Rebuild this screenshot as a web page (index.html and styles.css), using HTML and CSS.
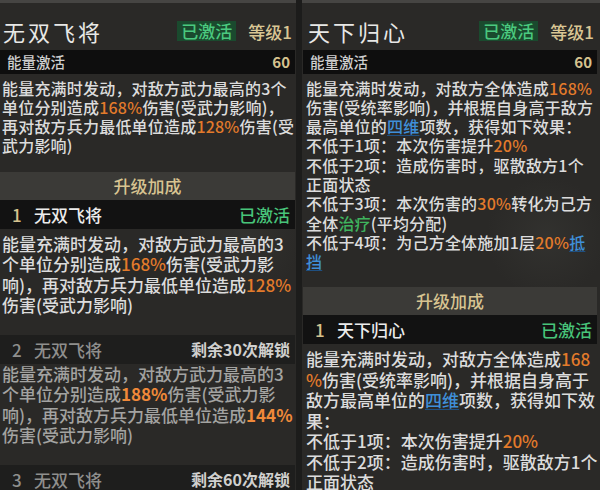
FILE: index.html
```html
<!DOCTYPE html>
<html lang="zh-CN">
<head>
<meta charset="utf-8">
<title>技能详情</title>
<link rel="stylesheet" href="styles.css">
</head>
<body>
<div class="screen">
  <section class="panel panel-left">
    <header class="head">
      <h1 class="title">无双飞将</h1>
      <span class="badge">已激活</span>
      <span class="level">等级1</span>
    </header>
    <div class="energy"><span>能量激活</span><span class="energy-val">60</span></div>
    <p class="desc">能量充满时发动，对敌方武力最高的3个<br>单位分别造成<span class="hl">168%</span>伤害(受武力影响)，<br>再对敌方兵力最低单位造成<span class="hl">128%</span>伤害(受<br>武力影响)</p>
    <div class="up-head">升级加成</div>
    <div class="row"><span class="num">1</span><span class="name">无双飞将</span><span class="state">已激活</span></div>
    <p class="desc2">能量充满时发动，对敌方武力最高的3<br>个单位分别造成<span class="hl">168%</span>伤害(受武力影<br>响)，再对敌方兵力最低单位造成<span class="hl">128%</span><br>伤害(受武力影响)</p>
    <div class="row locked"><span class="num">2</span><span class="name">无双飞将</span><span class="state">剩余30次解锁</span></div>
    <p class="desc2 dim">能量充满时发动，对敌方武力最高的3<br>个单位分别造成<span class="hl">188%</span>伤害(受武力影<br>响)，再对敌方兵力最低单位造成<span class="hl">144%</span><br>伤害(受武力影响)</p>
    <div class="row locked"><span class="num">3</span><span class="name">无双飞将</span><span class="state">剩余60次解锁</span></div>
  </section>
  <section class="panel panel-right">
    <header class="head">
      <h1 class="title">天下归心</h1>
      <span class="badge">已激活</span>
      <span class="level">等级1</span>
    </header>
    <div class="energy"><span>能量激活</span><span class="energy-val">60</span></div>
    <p class="desc">能量充满时发动，对敌方全体造成<span class="hl">168%</span><br>伤害(受统率影响)，并根据自身高于敌方<br>最高单位的<span class="link">四维</span>项数，获得如下效果：<br>不低于1项：本次伤害提升<span class="hl">20%</span><br>不低于2项：造成伤害时，驱散敌方1个<br>正面状态<br>不低于3项：本次伤害的<span class="hl">30%</span>转化为己方<br>全体<span class="heal">治疗</span>(平均分配)<br>不低于4项：为己方全体施加1层<span class="hl">20%</span><span class="link">抵</span><br><span class="link">挡</span></p>
    <div class="up-head">升级加成</div>
    <div class="row"><span class="num">1</span><span class="name">天下归心</span><span class="state">已激活</span></div>
    <p class="desc2">能量充满时发动，对敌方全体造成<span class="hl">168</span><br><span class="hl">%</span>伤害(受统率影响)，并根据自身高于<br>敌方最高单位的<span class="link">四维</span>项数，获得如下效<br>果：<br>不低于1项：本次伤害提升<span class="hl">20%</span><br>不低于2项：造成伤害时，驱散敌方1个<br>正面状态</p>
  </section>
</div>
</body>
</html>
```
FILE: styles.css
```css
html, body {
  margin: 0;
  padding: 0;
  background: #1c1c1b;
}

.screen {
  width: 600px;
  height: 490px;
  overflow: hidden;
  display: flex;
  gap: 6px;
  font-family: "Noto Sans CJK SC", "Noto Sans", sans-serif;
  font-weight: 500;
  color: #dadada;
}

.panel {
  box-sizing: border-box;
  height: 490px;
  overflow: hidden;
  border-top: 3px solid #464543;
  background:
    radial-gradient(circle at 82% 48%, rgba(60, 60, 56, 0.45), rgba(0, 0, 0, 0) 60px),
    #2a2927;
}

.panel-left {
  width: 296px;
  padding: 0 1px 0 0;
}

.panel-right {
  width: 298px;
  padding: 0 3px 0 1px;
}

.head {
  display: flex;
  align-items: center;
  height: 36px;
  padding: 10px 0 1px;
}

.title {
  flex: 1;
  margin: 0;
  padding-left: 3px;
  font-size: 22px;
  font-weight: 400;
  letter-spacing: 3px;
  line-height: 36px;
  color: #e8e8e6;
}

.panel-right .title {
  padding-left: 5px;
}

.badge {
  height: 20px;
  line-height: 20px;
  padding: 0 4px;
  font-size: 17px;
  color: #4bc97f;
  background: #1a4a2e;
}

.level {
  margin: 0 3px 0 12px;
  font-size: 17px;
  color: #d9c694;
}

.energy {
  display: flex;
  justify-content: space-between;
  height: 24px;
  line-height: 24px;
  padding: 0 5px 0 7px;
  font-size: 14.5px;
  color: #cfcfcf;
  background: #0e0e0e;
}

.energy-val {
  font-size: 15px;
  font-weight: 700;
  color: #d6c28e;
}

.desc {
  margin: 4.5px 0 0;
  padding-left: 2px;
  font-size: 16px;
  line-height: 19.3px;
  letter-spacing: 0.2px;
  white-space: nowrap;
  color: #dcdcdc;
}

.panel-right .desc,
.panel-right .desc2 {
  padding-left: 3px;
}

.hl {
  color: #e37b2b;
}

.link {
  color: #3f8fd8;
  text-decoration: underline;
  text-decoration-color: #1f4f80;
  text-underline-offset: 2px;
}

.heal {
  color: #3fb35e;
}

.up-head {
  margin-top: 16px;
  height: 28px;
  line-height: 28px;
  text-align: center;
  font-size: 17px;
  color: #d8c491;
  background: #3b3a37;
}

.row {
  display: flex;
  align-items: center;
  height: 29px;
  padding: 0 5px 0 12px;
  font-size: 17px;
  background: #121212;
}

.num {
  width: 22px;
  color: #d6c28e;
}

.name {
  flex: 1;
  color: #ececec;
}

.state {
  color: #48c47a;
}

.row.locked {
  background: #1e1e1d;
}

.row.locked .num,
.row.locked .name {
  color: #8f8f8d;
}

.row.locked .state {
  font-weight: 700;
  font-size: 16px;
  color: #d0d0ce;
}

.desc2 {
  margin: 5px 0 19px;
  padding-left: 2px;
  font-size: 17px;
  line-height: 20.5px;
  white-space: nowrap;
  color: #dcdcdc;
}

.desc2.dim {
  margin-top: 0;
  color: #a3a3a1;
}

.desc2.dim .hl {
  font-weight: 700;
  color: #f0893a;
}
```
